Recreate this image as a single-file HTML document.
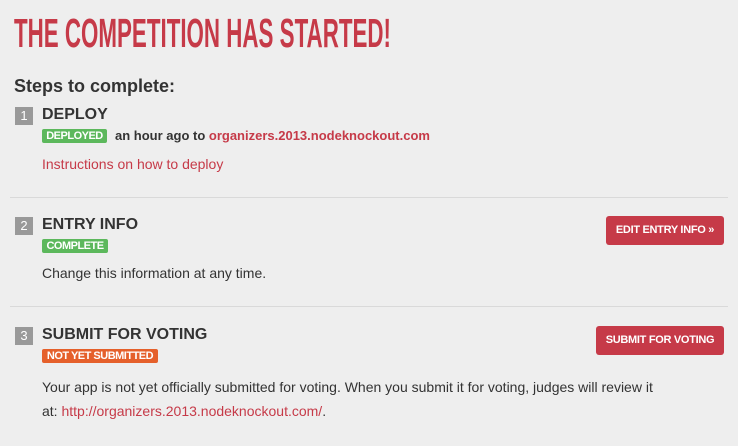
<!DOCTYPE html>
<html><head><style>
body{margin:0;background:#eeeeee;width:738px;height:446px;overflow:hidden;font-family:"Liberation Sans",sans-serif;color:#333;position:relative}
.a{position:absolute;white-space:nowrap}
.title{left:14px;top:13px;font-size:41px;font-weight:bold;color:#c63a48;transform:scaleX(0.545);transform-origin:0 0;line-height:41px}
.h{font-weight:bold;font-size:16px}
.num{background:#999;color:#fff;width:18px;height:18px;font-size:13px;text-align:center;line-height:18px}
.badge{color:#fff;font-weight:bold;font-size:11px;height:14px;line-height:14px;padding:0 3px;border-radius:2px;letter-spacing:-0.5px;text-align:center}
.btn{background:#c63a48;color:#fff;font-weight:bold;font-size:11px;border-radius:3px;text-align:center;letter-spacing:-0.3px}
.hr{left:10px;width:718px;height:1px;background:#d9d9d9}
a{color:#c63a48;text-decoration:none}
.p{font-size:14px;color:#333}
</style></head><body>
<div class="a title">THE COMPETITION HAS STARTED!</div>
<div class="a" style="left:14px;top:76px;font-size:18px;font-weight:bold">Steps to complete:</div>

<div class="a num" style="left:15px;top:107px">1</div>
<div class="a h" style="left:42px;top:106px">DEPLOY</div>
<div class="a badge" style="left:42px;top:129px;background:#5cb85c;width:59px">DEPLOYED</div>
<div class="a" style="left:115px;top:128px;font-size:13px;font-weight:bold">an hour ago to <a>organizers.2013.nodeknockout.com</a></div>
<div class="a p" style="left:42px;top:156px"><a>Instructions on how to deploy</a></div>
<div class="a hr" style="top:197px"></div>

<div class="a num" style="left:15px;top:217px">2</div>
<div class="a h" style="left:42px;top:216px">ENTRY INFO</div>
<div class="a badge" style="left:42px;top:239px;background:#5cb85c;width:60px">COMPLETE</div>
<div class="a p" style="left:42px;top:265px">Change this information at any time.</div>
<div class="a btn" style="left:606px;top:216px;width:118px;height:29px;line-height:29px">EDIT ENTRY INFO »</div>
<div class="a hr" style="top:306px"></div>

<div class="a num" style="left:15px;top:327px">3</div>
<div class="a h" style="left:42px;top:326px">SUBMIT FOR VOTING</div>
<div class="a badge" style="left:42px;top:349px;background:#e5602b;width:110px">NOT YET SUBMITTED</div>
<div class="a btn" style="left:596px;top:326px;width:128px;height:29px;line-height:29px">SUBMIT FOR VOTING</div>
<div class="a p" style="left:42px;top:375px;line-height:24px">Your app is not yet officially submitted for voting. When you submit it for voting, judges will review it<br>at: <a>http://organizers.2013.nodeknockout.com/</a>.</div>
</body></html>
